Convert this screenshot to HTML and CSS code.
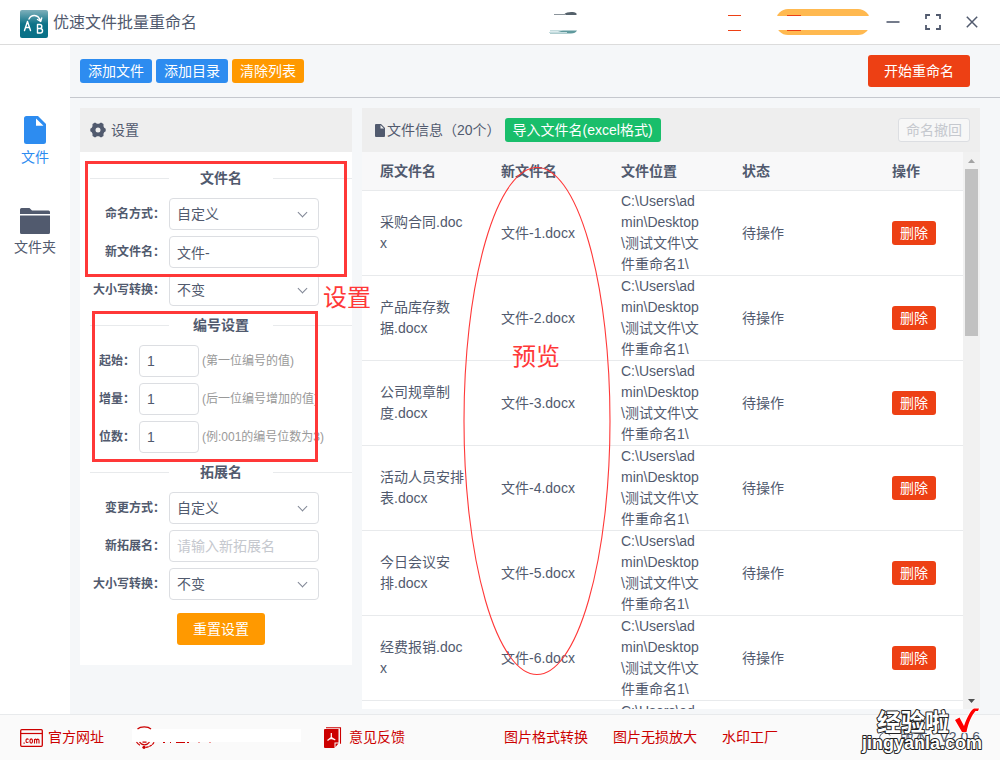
FILE: index.html
```html
<!DOCTYPE html>
<html lang="zh-CN">
<head>
<meta charset="utf-8">
<title>优速文件批量重命名</title>
<link rel="stylesheet" href="styles.css">
</head>
<body>
<header class="titlebar">
  <svg class="logo" width="28" height="28" viewBox="0 0 28 28" aria-hidden="true">
    <defs><linearGradient id="lg" x1="0" y1="0" x2="0" y2="1"><stop offset="0" stop-color="#7fb0bb"/><stop offset=".5" stop-color="#0d7388"/><stop offset="1" stop-color="#087087"/></linearGradient></defs>
    <rect width="28" height="28" rx="2" fill="url(#lg)"/>
    <g fill="none" stroke="#fff" stroke-width="1.4" stroke-linejoin="round" stroke-linecap="round">
      <path d="M4.500 20.500L7.500 11.500L10.500 20.500M5.500 17.500h4"/>
      <path d="M17.500 14.500v8.500h2.800a2.200 2.200 0 0 0 0-4.500h-2.500h2a2 2 0 0 0 0-4z"/>
      <path d="M9 9C11 4.500 18 3.500 20.500 11M17.500 9.500l3.200 2 1-3.500"/>
    </g>
  </svg>
  <h1 class="app-name">优速文件批量重命名</h1>
  <svg class="avatar" width="28" height="24" viewBox="0 0 28 24" aria-hidden="true">
    <path d="M15 4.500C18 1.500 25 1.500 27.500 3.500v1.500H17z" fill="#55616b"/><path d="M5 4.500h12" stroke="#8b949b"/>
    <path d="M1 20.500h27c-1 2-3 3-6 3H1z" fill="#5f999d"/><path d="M1 20.500h13l-5 1.500H1z" fill="#dcebed"/><path d="M0 22.500h18" stroke="#c5dde0"/>
  </svg>
  <svg class="marks" width="14" height="18" viewBox="0 0 14 18" aria-hidden="true"><path d="M1 1.500h13M1 16.500h13" stroke="#ed4014" stroke-width="1.200"/></svg>
  <div class="pill"><svg width="94" height="26" viewBox="0 0 94 26" aria-hidden="true"><rect width="94" height="26" rx="12" fill="#ffb950"/><path d="M11 6.500h14M11 21.500h14" stroke="#ed4014" stroke-width="1.200"/><path d="M0 7h94v14H0z" fill="#fff"/></svg></div>
  <button class="win" type="button" aria-label="最小化"><svg width="14" height="16" viewBox="0 0 14 16"><path d="M.5 8h13" stroke="#515a6e" stroke-width="1.600"/></svg></button>
  <button class="win" type="button" aria-label="最大化"><svg width="16" height="16" viewBox="0 0 16 16"><path d="M1 5V1h4M11 1h4v4M15 11v4h-4M5 15H1v-4" fill="none" stroke="#515a6e" stroke-width="1.800"/></svg></button>
  <button class="win" type="button" aria-label="关闭"><svg width="12" height="12" viewBox="0 0 12 12"><path d="M.8.8l10.400 10.400M11.200.8L.8 11.200" stroke="#515a6e" stroke-width="1.500"/></svg></button>
</header>

<div class="body">
  <nav class="sidebar">
    <a class="nav-item active" href="#files"><svg width="22" height="28" viewBox="0 0 22 28" aria-hidden="true"><path fill-rule="evenodd" fill="#2d8cf0" d="M2.500 0H14l8 8v17.500a2.500 2.500 0 0 1-2.500 2.500h-17A2.500 2.500 0 0 1 0 25.500v-23A2.500 2.500 0 0 1 2.500 0zM12 2.500v7.300h7.500z"/></svg>文件</a>
    <a class="nav-item" href="#folders"><svg width="30" height="26" viewBox="0 0 30 26" aria-hidden="true"><path fill="#515a6e" d="M0 6V1.500A1.500 1.500 0 0 1 1.500 0h8L12 2.500h16.500A1.500 1.500 0 0 1 30 4v2zM0 7.500h30v17a1.500 1.500 0 0 1-1.500 1.500h-27A1.500 1.500 0 0 1 0 24.500z"/></svg>文件夹</a>
  </nav>

  <main class="main">
    <div class="toolbar">
      <button class="btn blue" type="button">添加文件</button>
      <button class="btn blue" type="button">添加目录</button>
      <button class="btn orange" type="button">清除列表</button>
      <button class="btn red large push" type="button">开始重命名</button>
    </div>

    <div class="panels">
      <section class="panel settings">
        <div class="panel-head gear-head">
          <svg width="16" height="16" viewBox="0 0 16 16" aria-hidden="true"><path fill="#515a6e" fill-rule="evenodd" d="M5 .5l2 1.200h2L11 .5l2.500 1.500v2.300l.7 1.500 1.500.9v2.600l-1.500.9-.7 1.500V14L11 15.500l-2-1.200H7L5 15.500 2.500 14v-2.300l-.7-1.500-1.500-.9V6.700l1.500-.9.700-1.500V2zM8 5.500a2.500 2.500 0 1 0 0 5 2.500 2.500 0 0 0 0-5z"/></svg>
          <h2>设置</h2>
        </div>
        <form class="form">
          <h3 class="divider"><span>文件名</span></h3>
          <div class="fields">
            <div class="field"><label for="mode">命名方式：</label><span class="select"><select id="mode"><option>自定义</option></select></span></div>
            <div class="field"><label for="name">新文件名：</label><input id="name" type="text" value="文件-"></div>
            <div class="field"><label for="case">大小写转换：</label><span class="select"><select id="case"><option>不变</option></select></span></div>
          </div>
          <h3 class="divider"><span>编号设置</span></h3>
          <div class="fields">
            <div class="field num"><label for="start">起始：</label><input id="start" type="text" value="1"><span class="hint">(第一位编号的值)</span></div>
            <div class="field num"><label for="step">增量：</label><input id="step" type="text" value="1"><span class="hint">(后一位编号增加的值)</span></div>
            <div class="field num"><label for="digits">位数：</label><input id="digits" type="text" value="1"><span class="hint">(例:001的编号位数为3)</span></div>
          </div>
          <h3 class="divider"><span>拓展名</span></h3>
          <div class="fields">
            <div class="field"><label for="ext-mode">变更方式：</label><span class="select"><select id="ext-mode"><option>自定义</option></select></span></div>
            <div class="field"><label for="ext">新拓展名：</label><input id="ext" type="text" placeholder="请输入新拓展名"></div>
            <div class="field"><label for="ext-case">大小写转换：</label><span class="select"><select id="ext-case"><option>不变</option></select></span></div>
          </div>
          <button class="btn orange large reset" type="button">重置设置</button>
        </form>
      </section>

      <section class="panel files">
        <div class="panel-head">
          <svg width="10" height="13" viewBox="0 0 10 13" aria-hidden="true"><path fill="#515a6e" fill-rule="evenodd" d="M1 0h5l4 4v8a1 1 0 0 1-1 1H1a1 1 0 0 1-1-1V1a1 1 0 0 1 1-1zM5.500 1v3.500H9z"/></svg>
          <h2>文件信息（20个）</h2>
          <button class="btn green" type="button">导入文件名(excel格式)</button>
          <button class="btn ghost push" type="button" disabled>命名撤回</button>
        </div>
        <div class="list">
          <div class="table-wrap">
            <table>
              <colgroup><col class="c-old"><col class="c-new"><col class="c-loc"><col class="c-state"><col class="c-act"></colgroup>
              <thead><tr><th>原文件名</th><th>新文件名</th><th>文件位置</th><th>状态</th><th>操作</th></tr></thead>
              <tbody>
                <tr><td>采购合同.docx</td><td>文件-1.docx</td><td class="loc">C:\Users\admin\Desktop\测试文件\文件重命名1\</td><td>待操作</td><td><button class="btn red" type="button">删除</button></td></tr>
                <tr><td>产品库存数据.docx</td><td>文件-2.docx</td><td class="loc">C:\Users\admin\Desktop\测试文件\文件重命名1\</td><td>待操作</td><td><button class="btn red" type="button">删除</button></td></tr>
                <tr><td>公司规章制度.docx</td><td>文件-3.docx</td><td class="loc">C:\Users\admin\Desktop\测试文件\文件重命名1\</td><td>待操作</td><td><button class="btn red" type="button">删除</button></td></tr>
                <tr><td>活动人员安排表.docx</td><td>文件-4.docx</td><td class="loc">C:\Users\admin\Desktop\测试文件\文件重命名1\</td><td>待操作</td><td><button class="btn red" type="button">删除</button></td></tr>
                <tr><td>今日会议安排.docx</td><td>文件-5.docx</td><td class="loc">C:\Users\admin\Desktop\测试文件\文件重命名1\</td><td>待操作</td><td><button class="btn red" type="button">删除</button></td></tr>
                <tr><td>经费报销.docx</td><td>文件-6.docx</td><td class="loc">C:\Users\admin\Desktop\测试文件\文件重命名1\</td><td>待操作</td><td><button class="btn red" type="button">删除</button></td></tr>
                <tr><td></td><td></td><td class="loc">C:\Users\admin\Desktop\测试文件\文件重命名1\</td><td></td><td></td></tr>
              </tbody>
            </table>
          </div>
          <div class="scrollbar" aria-hidden="true">
            <svg width="17" height="17" viewBox="0 0 17 17"><path d="M5 11l3.500-4 3.500 4z" fill="#a3a3a3"/></svg>
            <div class="track"><div class="thumb"></div></div>
            <svg width="17" height="17" viewBox="0 0 17 17"><path d="M5 7l3.500 4L12 7z" fill="#505050"/></svg>
          </div>
        </div>
      </section>
    </div>
  </main>
</div>

<footer class="footer">
  <a class="site" href="#site"><svg width="23" height="18" viewBox="0 0 23 18" aria-hidden="true"><g fill="none" stroke="#c00"><rect x=".7" y=".7" width="21.600" height="16.600" rx="1" stroke-width="1.300"/><path d="M1 4.500h21" stroke-width="1.200"/><path d="M8.500 10.500c-1.500-1.200-2.500-.5-2.500 1.200s1 2.500 2.500 1.200M14.500 14.500v-4.500M14.500 11c1-1.300 2.200-1 2.200.5v3M16.700 11c1-1.300 2.300-1 2.300.5v3" stroke-width="1.100"/><ellipse cx="11.200" cy="12" rx="1.300" ry="2.100" stroke-width="1.100"/></g><path d="M3.500 13.500h1.200v1.200H3.500z" fill="#c00"/></svg>官方网址</a>
  <div class="service"><svg width="169" height="24" viewBox="0 0 169 24" aria-hidden="true"><path d="M0 3h169v13H0z" fill="#fff"/><g fill="none" stroke="#c00" stroke-width="1.200"><path d="M5.500 3C8.500 .2 16 .2 19 3"/><path d="M4.500 16c1 1.500 2 2.500 3.500 3.300M7.500 16.200c1.500 2 3 2.600 5 2.600s3.500-.6 5-2.600M10.500 16.200h4"/><path d="M22 16.200c-1.500 3-4.500 4.800-9 5.300" stroke-dasharray="3 .6"/></g><circle cx="12" cy="21.300" r="1.600" fill="#c00"/><path d="M31 16.500h2M38 16.500h1M44 16.500h9M55 16.500h2" stroke="#c00"/><path d="M66 16.500h2M77 16.500h2" stroke="#e99"/></svg></div>
  <a class="feedback" href="#feedback"><svg width="18" height="21" viewBox="0 0 18 21" aria-hidden="true"><path d="M2 .7h14.500v16" fill="none" stroke="#c00" stroke-width="1.100"/><path d="M1 2h13.500v13.500h-4V21H1a1 1 0 0 1-1-1V3a1 1 0 0 1 1-1zM11.500 20v-3.500h3z" fill="#c00"/><path d="M7.300 6v4.500L3.500 13.500M7.300 10.500l4 2.500M4.500 12.500l2.800-1 3 1" fill="none" stroke="#fff" stroke-width="1.200"/></svg>意见反馈</a>
  <a class="link-first" href="#convert">图片格式转换</a>
  <a class="link" href="#enlarge">图片无损放大</a>
  <a class="link" href="#watermark">水印工厂</a>
  <div class="version"><svg width="14" height="14" viewBox="0 0 14 14" aria-hidden="true"><path d="M12 4.500A5.500 5.500 0 1 0 12.500 8H8.500" fill="none" stroke="#515a6e"/></svg>版本: <span>V2.0.6</span></div>
</footer>

<div class="mark mark-name"></div>
<div class="mark mark-number"></div>
<div class="note note-settings">设置</div>
<div class="note note-preview">预览</div>
<svg class="note-oval" width="148" height="510" viewBox="0 0 148 510" aria-hidden="true"><ellipse cx="74" cy="255" rx="73" ry="253.500" fill="none" stroke="#ff3838" stroke-width="1.100"/></svg>
<svg class="stamp" width="132" height="54" viewBox="0 0 132 54">
  <g class="stamp-text"><text x="21" y="25" font-size="24">经验啦</text><text x="6" y="43" font-size="18">jingyanla.com</text></g>
  <path d="M99 14l4.500-2.500 4.500 8.500C111 11 115 4 118 2.500h5l-1 2.500h-2.500c-3.500 4-7 11-9 21h-4.500z" fill="#f00" stroke="#fff" stroke-width="1.500" paint-order="stroke"/>
</svg>
</body>
</html>
```
FILE: styles.css
```css
* { box-sizing: border-box; }

body {
  margin: 0;
  height: 100vh;
  display: grid;
  grid-template-rows: 45px minmax(0, 1fr) 46px;
  position: relative;
  overflow: hidden;
  background: #fff;
  color: #515a6e;
  font: 14px/21px "Liberation Sans", "Noto Sans CJK SC", sans-serif;
}

h1, h2, h3 { margin: 0; font-size: 14px; font-weight: 400; }
a { color: inherit; text-decoration: none; }
svg { display: block; flex: none; }
button, input, select { font: inherit; color: inherit; }

/* title bar */
.titlebar {
  display: flex;
  align-items: center;
  padding: 0 22px 0 20px;
  border-bottom: 1px solid #dcdcdc;
}
.logo { margin-top: 3px; }
.app-name { margin-left: 5px; font-size: 16px; }
.avatar { margin-left: auto; }
.marks { margin-left: 150px; margin-top: 1px; }
.pill { margin: 0 16px 0 35px; }
.win { padding: 0; border: 0; background: none; margin-right: 25px; }
.win:last-child { margin-right: 0; }

/* frame */
.body { display: grid; grid-template-columns: 70px minmax(0, 1fr); min-height: 0; }
.sidebar { display: flex; flex-direction: column; gap: 40px; padding-top: 71px; }
.nav-item { display: flex; flex-direction: column; align-items: center; gap: 3px; }
.nav-item.active { color: #2d8cf0; }
.main {
  display: grid;
  grid-template-rows: 53px minmax(0, 1fr);
  background: #f5f7f9;
  min-height: 0;
}
.toolbar {
  display: flex;
  align-items: center;
  gap: 4px;
  padding: 0 30px 0 10px;
  border-bottom: 1px solid #c5c8ce;
}
.push { margin-left: auto; }

.btn {
  height: 24px;
  padding: 0 7px;
  border: 1px solid transparent;
  border-radius: 3px;
  color: #fff;
  line-height: 22px;
  white-space: nowrap;
}
.btn.large { height: 32px; padding: 0 15px; line-height: 30px; }
.blue { background: #2d8cf0; }
.orange { background: #f90; }
.red { background: #ed4014; }
.green { background: #19be6b; }
.ghost { background: #f7f7f7; border-color: #dcdee2; color: #c5c8ce; }

.panels {
  display: grid;
  grid-template-columns: 272px minmax(0, 1fr);
  gap: 10px;
  padding: 10px 20px 5px 10px;
  min-height: 0;
}
.panel { background: #fff; }
.panel-head {
  display: flex;
  align-items: center;
  height: 44px;
  padding: 0 10px 0 13px;
  background: #eee;
}
.panel-head h2 { margin: 0 4px 0 2px; white-space: nowrap; }
.gear-head { padding-left: 10px; }
.gear-head h2 { margin-left: 5px; }

/* settings form */
.settings { align-self: start; }
.form { padding: 7px 0 20px 10px; }
.divider {
  display: grid;
  grid-template-columns: 1fr 104px 1fr;
  align-items: center;
  height: 39px;
  text-align: center;
  font-weight: 700;
}
.divider::before, .divider::after { content: ""; border-top: 1px solid #e8eaec; }
.fields { display: grid; gap: 6px; }
.field { display: grid; grid-template-columns: 79px 150px; align-items: center; }
.field label {
  justify-self: end;
  padding-right: 4px;
  font-size: 12px;
  font-weight: 700;
  white-space: nowrap;
}
.field.num { grid-template-columns: 49px 60px auto; }
.hint { padding-left: 3px; font-size: 12px; color: #999; white-space: nowrap; }
.field input, .field select {
  width: 100%;
  height: 32px;
  padding: 0 7px;
  border: 1px solid #dcdee2;
  border-radius: 4px;
  background: #fff;
}
.field select { appearance: none; }
.field input::placeholder { color: #c5c8ce; opacity: 1; }
.select { position: relative; }
.select::after {
  content: "";
  position: absolute;
  right: 13px;
  top: 11px;
  width: 6px;
  height: 6px;
  border: solid #808695;
  border-width: 0 1px 1px 0;
  transform: rotate(45deg);
  pointer-events: none;
}
.reset { display: block; margin: 13px auto 0; }

/* file list */
.files { display: flex; flex-direction: column; min-height: 0; }
.list { display: flex; flex: 1; min-height: 0; }
.table-wrap { flex: 1; min-width: 0; overflow: hidden; }
table { width: 100%; table-layout: fixed; border-spacing: 0; }
.c-old, .c-loc { width: 121px; }
.c-new { width: 120px; }
.c-state { width: 150px; }
th, td {
  padding: 0 18px;
  border-bottom: 1px solid #e8eaec;
  text-align: left;
  word-break: break-all;
}
th { height: 39px; background: #f8f8f9; }
td { height: 85px; }
td.loc { padding-right: 22px; }
td .btn { display: block; }

.scrollbar { display: flex; flex-direction: column; width: 17px; background: #f1f1f1; }
.track { flex: 1; padding: 0 2px; }
.thumb { height: 32%; background: #c1c1c1; }

/* footer */
.footer {
  display: flex;
  align-items: center;
  padding: 0 20px;
  border-top: 1px solid #e8eaec;
  background: #fafafa;
  color: #c00;
  white-space: nowrap;
}
.footer a { display: flex; align-items: center; }
.site { gap: 5px; }
.service { margin: 0 23px 0 28px; }
.feedback { gap: 7px; }
.link-first { margin-left: 99px; }
.link { margin-left: 25px; }
.version { display: flex; align-items: center; gap: 8px; margin-left: auto; color: #515a6e; }

/* annotations over the window */
.mark, .note, .note-oval, .stamp { position: absolute; pointer-events: none; }
.mark { border: 3px solid #ff3838; }
.mark-name { left: 85px; top: 161px; width: 262px; height: 116px; }
.mark-number { left: 92px; top: 311px; width: 226px; height: 151px; }
.note { color: #ff3838; font-size: 24px; line-height: 32px; }
.note-settings { left: 323px; top: 282px; }
.note-preview { left: 512px; top: 341px; }
.note-oval { left: 463px; top: 166px; }
.stamp { right: 12px; bottom: 0; }
.stamp-text {
  font-family: "Liberation Sans", "Noto Sans CJK SC", sans-serif;
  font-weight: 700;
  fill: #fff;
  stroke: #222;
  stroke-width: 2px;
  stroke-linejoin: round;
  paint-order: stroke;
}
```
